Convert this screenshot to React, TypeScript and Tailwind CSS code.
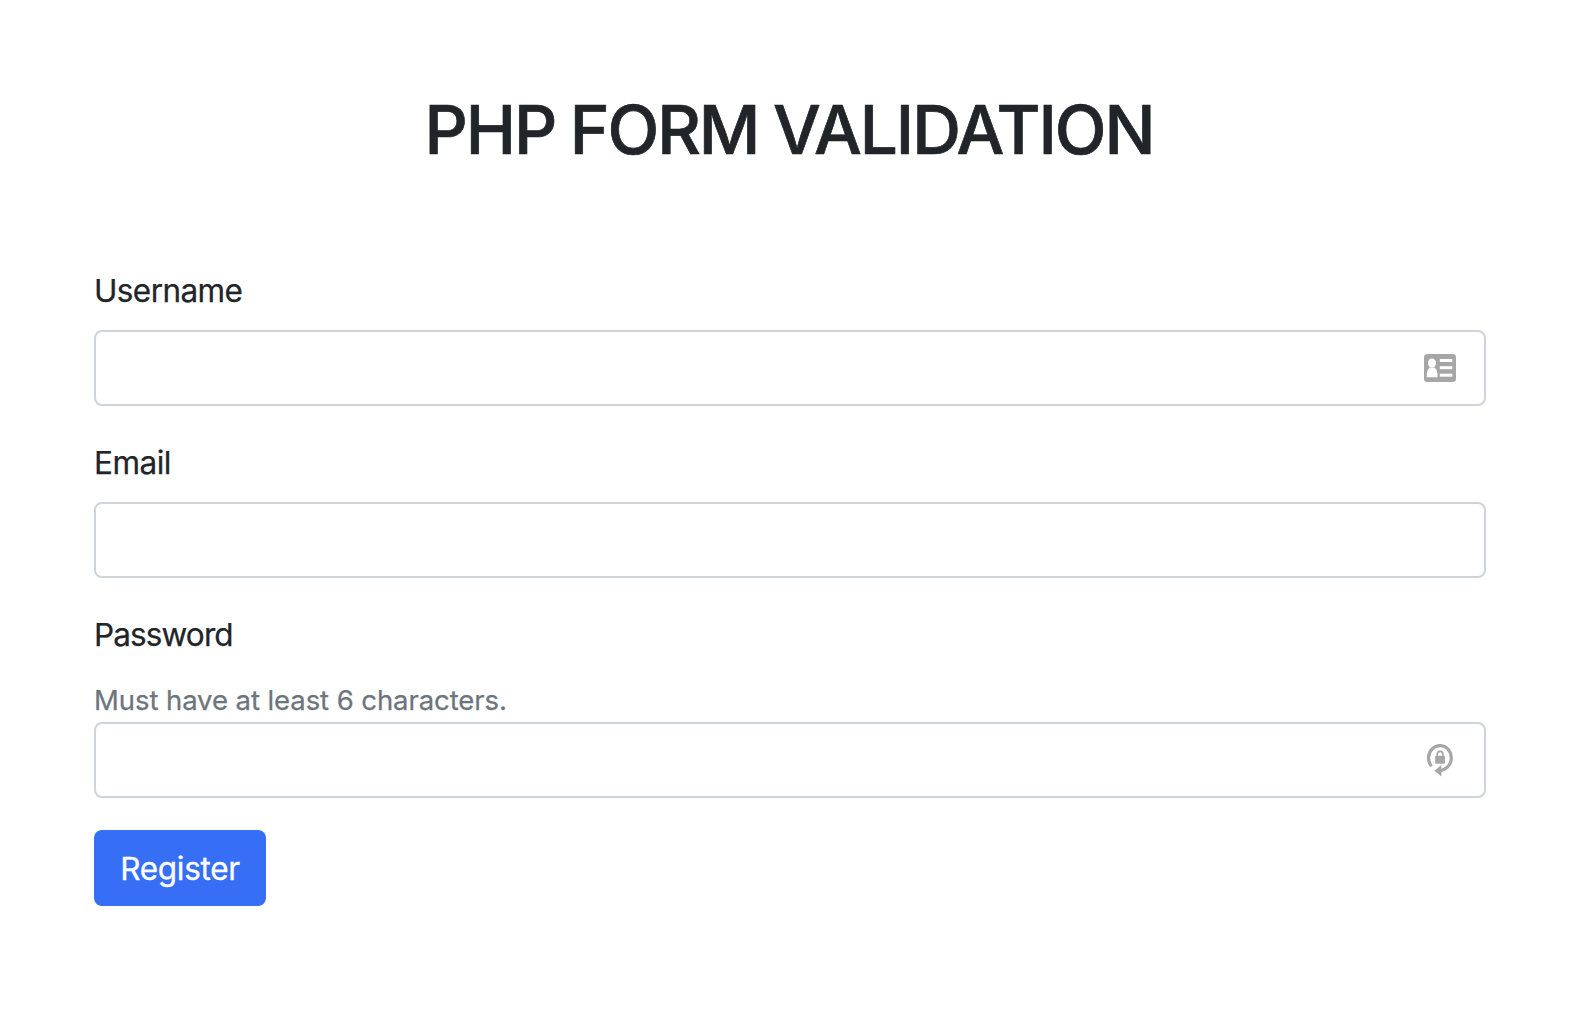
import React from "react";

function IdCardIcon() {
  return (
    <svg width="32" height="28" viewBox="0 0 32 28" aria-hidden="true">
      <rect width="32" height="28" rx="3.5" fill="#a6a6a6" />
      <g fill="#fff">
        <ellipse cx="8" cy="9" rx="4" ry="4.600" />
        <path d="M2.700 23.200c0-5 .7-8 3-9.700h4.700c2.300 1.700 3.200 4.700 3.200 9.700z" />
        <rect x="15.800" y="5" width="12.500" height="3" />
        <rect x="15.800" y="12.200" width="12.500" height="3" />
        <rect x="15.800" y="19.700" width="12.500" height="3" />
      </g>
    </svg>
  );
}

function LockCycleIcon() {
  return (
    <svg className="mr-0.5" width="28" height="34" viewBox="0 0 28 34" aria-hidden="true">
      <path d="M5.600 23.200A11.400 12.200 0 1 1 21.200 24.200Q18.500 27 14.500 27.800" fill="none" stroke="#a6a6a6" strokeWidth="3.200" />
      <path d="M8.400 27.700L15.400 22V33.400z" fill="#a6a6a6" />
      <rect x="9.200" y="12.800" width="9.800" height="7.900" rx="0.700" fill="#a6a6a6" />
      <path d="M11.300 13.300V11.200a2.800 2.800 0 0 1 5.600 0V13.300" fill="none" stroke="#a6a6a6" strokeWidth="1.600" />
    </svg>
  );
}

type FieldProps = {
  id: string;
  label: string;
  type: string;
  hint?: string;
  spacing: string;
  icon?: React.ReactNode;
};

function Field({ id, label, type, hint, spacing, icon }: FieldProps) {
  return (
    <div className="mb-8">
      <label htmlFor={id} className="mb-4 block h-12 text-[31.500px] leading-[50px] [-webkit-text-stroke:0.25px_currentColor]">
        <span className={spacing}>{label}</span>
      </label>
      {hint && (
        <p className="h-12 text-[27.500px] leading-[52px] text-[#6c757d] [-webkit-text-stroke:0.25px_currentColor]">
          <span className="tracking-[-0.08px]">{hint}</span>
        </p>
      )}
      <div className="flex h-[76px] items-center rounded-lg border-2 border-[#ced4da] bg-white pl-6 pr-7">
        <input id={id} type={type} className="h-full min-w-0 flex-1 outline-none" />
        {icon}
      </div>
    </div>
  );
}

export default function App() {
  return (
    <main className="h-[1020px] bg-white pl-[94px] pr-[88px] pt-[90px] font-['Inter',sans-serif] text-[#212529]">
      <h1 className="mb-[96px] h-20 whitespace-nowrap pr-[2px] text-center text-[67.500px] font-medium leading-[80px] tracking-[-2.03px] [word-spacing:-1.5px] [-webkit-text-stroke:0.7px_currentColor]">
        PHP FORM VALIDATION
      </h1>
      <form onSubmit={(e) => e.preventDefault()}>
        <Field id="username" label="Username" type="text" spacing="tracking-[-0.6px]" icon={<IdCardIcon />} />
        <Field id="email" label="Email" type="email" spacing="tracking-[-0.5px]" />
        <Field
          id="password"
          label="Password"
          type="password"
          spacing="tracking-[-0.88px]"
          hint="Must have at least 6 characters."
          icon={<LockCycleIcon />}
        />
        <button
          type="submit"
          className="h-[76px] w-[172px] rounded-lg bg-[#366ff5] pt-0.5 text-[31.500px] leading-[48px] tracking-[-0.28px] text-white [-webkit-text-stroke:0.3px_currentColor]"
        >
          Register
        </button>
      </form>
    </main>
  );
}
